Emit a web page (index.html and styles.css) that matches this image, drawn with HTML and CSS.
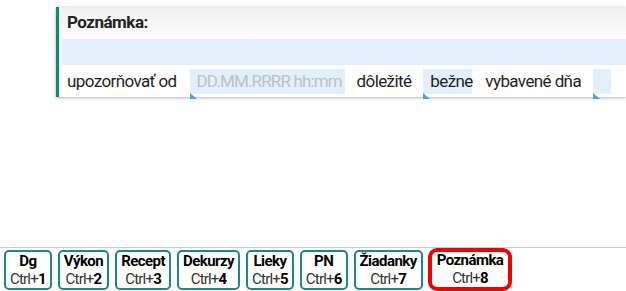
FILE: index.html
```html
<!DOCTYPE html>
<html lang="sk">
<head>
<meta charset="utf-8">
<link rel="stylesheet" href="styles.css">
</head>
<body>
<div class="page">
  <section class="panel">
    <div class="title">Poznámka:</div>
    <div class="band"></div>
    <div class="row">
      <span class="lbl lbl-first">upozorňovať od</span>
      <span class="field field-date"><span class="ph">DD.MM.RRRR hh:mm</span><i class="tri"></i></span>
      <span class="lbl">dôležité</span>
      <span class="field field-normal">bežne<i class="tri"></i></span>
      <span class="lbl">vybavené dňa</span>
      <span class="field field-small"><i class="tri"></i></span>
    </div>
  </section>
  <nav class="tabs">
    <div class="tab"><b>Dg</b><span>Ctrl+<b>1</b></span></div>
    <div class="tab"><b>Výkon</b><span>Ctrl+<b>2</b></span></div>
    <div class="tab"><b>Recept</b><span>Ctrl+<b>3</b></span></div>
    <div class="tab"><b>Dekurzy</b><span>Ctrl+<b>4</b></span></div>
    <div class="tab"><b>Lieky</b><span>Ctrl+<b>5</b></span></div>
    <div class="tab"><b>PN</b><span>Ctrl+<b>6</b></span></div>
    <div class="tab"><b>Žiadanky</b><span>Ctrl+<b>7</b></span></div>
    <div class="tab tab-active"><b>Poznámka</b><span>Ctrl+<b>8</b></span></div>
  </nav>
</div>
</body>
</html>
```
FILE: styles.css
```css
html, body {
  margin: 0;
  padding: 0;
  background: #fff;
}
body {
  font-family: Roboto, "Liberation Sans", Arial, sans-serif;
  color: #222;
}
.page {
  height: 291px;
  display: flex;
  flex-direction: column;
  overflow: hidden;
}
.panel {
  margin: 7px 0 0 56px;
  border-left: 3px solid #0f8a72;
  background: linear-gradient(#efefef, #fdfdfd 32px, #fff);
  box-shadow: 0 1px 3px rgba(0, 0, 0, 0.28), 0 0 2px rgba(0, 0, 0, 0.08);
  height: 90px;
  display: flex;
  flex-direction: column;
}
.title {
  height: 32px;
  box-sizing: border-box;
  padding: 6px 0 0 8px;
  font-size: 17px;
  line-height: 19px;
  letter-spacing: -0.5px;
  font-weight: bold;
  color: #222;
}
.band {
  height: 26px;
  margin-left: 3px;
  background: #e3f0fc;
}
.row {
  flex: 1;
  display: flex;
  align-items: center;
  padding-top: 1px;
  box-sizing: border-box;
}
.lbl {
  font-size: 17px;
  line-height: 25px;
  letter-spacing: -0.6px;
  margin-right: 12px;
  white-space: nowrap;
  color: #1e1e1e;
}
.lbl-first {
  margin-left: 8px;
  margin-right: 13px;
}
.field {
  position: relative;
  height: 25px;
  background: #e3f0fc;
  font-size: 17px;
  line-height: 25px;
  letter-spacing: -0.6px;
  box-sizing: border-box;
  margin-right: 12px;
  white-space: nowrap;
  color: #1e1e1e;
}
.field-date {
  width: 155px;
  padding-left: 7px;
}
.ph {
  display: block;
  overflow: hidden;
  color: #c0c0c0;
  letter-spacing: -0.85px;
}
.field-normal {
  width: 49px;
  padding-left: 7px;
  margin-right: 13px;
}
.field-small {
  width: 18px;
}
.tri {
  position: absolute;
  left: 0;
  bottom: -5px;
  width: 0;
  height: 0;
  border-left: 7px solid #4a9fe8;
  border-top: 6px solid transparent;
}
.tabs {
  margin-top: auto;
  border-top: 1px solid #c9c9c9;
  height: 44px;
  box-sizing: border-box;
  padding: 2px 0 0 4px;
  display: flex;
  align-items: flex-start;
  gap: 6px;
}
.tab {
  height: 40px;
  box-sizing: border-box;
  border: 2px solid #1c8a79;
  border-radius: 5px;
  padding: 1px 4px 0;
  display: flex;
  flex-direction: column;
  align-items: center;
  color: #000;
}
.tab > b {
  font-size: 15px;
  line-height: 17px;
  letter-spacing: -0.55px;
  font-weight: bold;
  color: #000;
}
.tab span {
  font-size: 15px;
  line-height: 19px;
  letter-spacing: -0.8px;
  color: #333;
}
.tab span b {
  color: #000;
}
.tab-active {
  border: 4px solid #f20000;
  border-radius: 9px;
  height: 43px;
  margin-top: -2px;
  margin-left: -1px;
  padding: 0 5px;
}
```
